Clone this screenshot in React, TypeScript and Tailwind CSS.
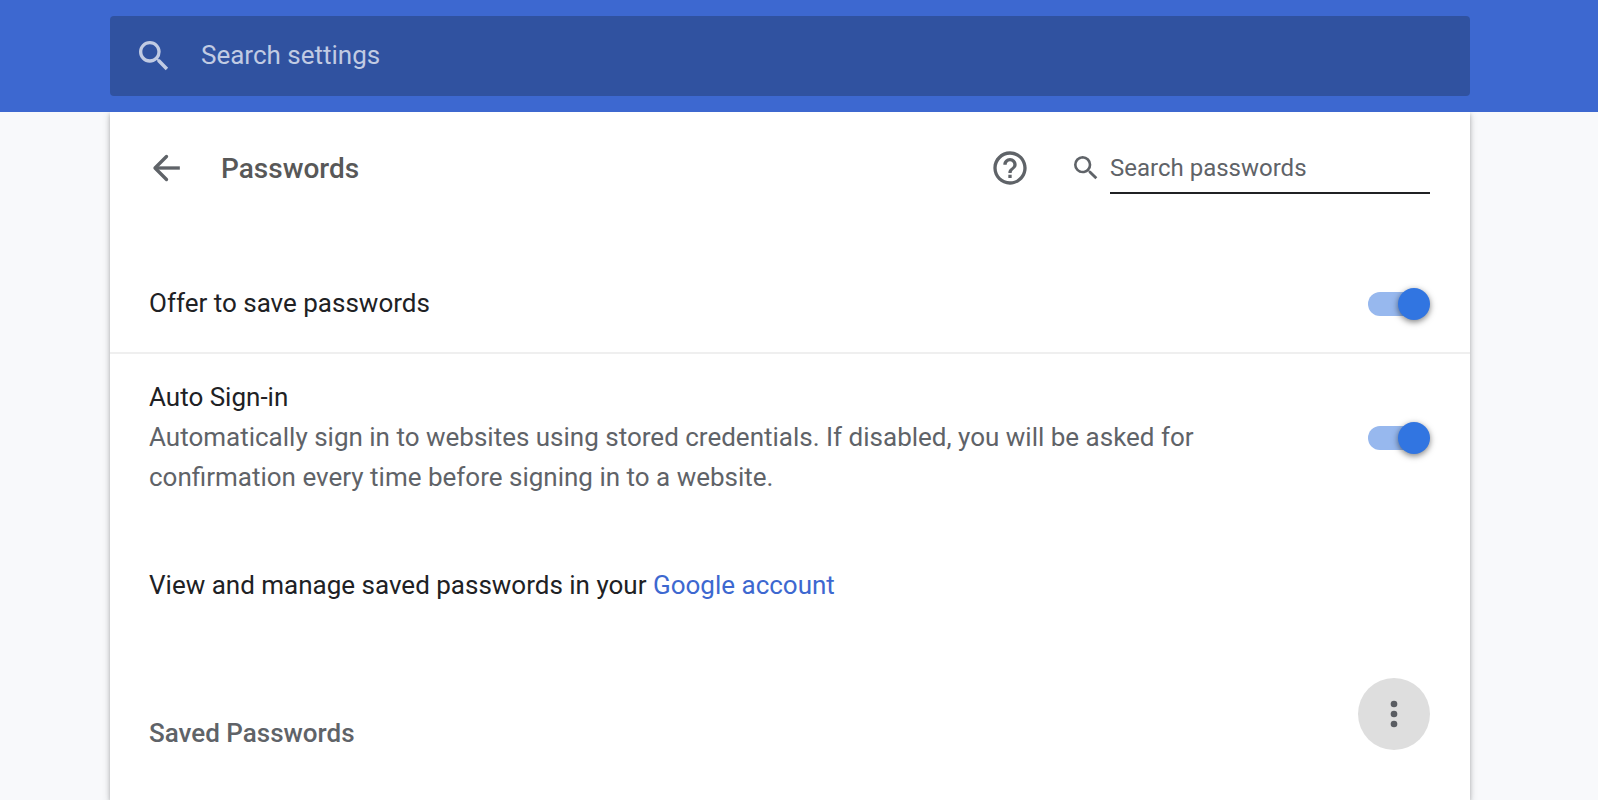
import React, { useState } from 'react';

const SearchIcon: React.FC<{ className: string }> = ({ className }) => (
  <svg viewBox="0 0 24 24" fill="currentColor" className={className} aria-hidden="true">
    <path d="M15.5 14h-.79l-.28-.27A6.471 6.471 0 0 0 16 9.5 6.5 6.5 0 1 0 9.5 16c1.61 0 3.09-.59 4.23-1.57l.27.28v.79l5 4.99L20.49 19l-4.99-5zm-6 0C7.01 14 5 11.99 5 9.5S7.01 5 9.5 5 14 7.01 14 9.5 11.99 14 9.5 14z" />
  </svg>
);

const BackIcon: React.FC = () => (
  <svg
    viewBox="0 0 24 24"
    fill="none"
    stroke="currentColor"
    strokeWidth="2"
    strokeLinejoin="round"
    className="size-10"
    aria-hidden="true"
  >
    <path d="M12.3 5.1L5.4 12l6.9 6.9" strokeLinecap="round" />
    <path d="M5.5 12H20.3" />
  </svg>
);

const HelpIcon: React.FC = () => (
  <svg viewBox="0 0 24 24" fill="currentColor" className="size-10" aria-hidden="true">
    <path d="M11 18h2v-2h-2v2zm1-16C6.48 2 2 6.48 2 12s4.48 10 10 10 10-4.48 10-10S17.52 2 12 2zm0 18c-4.41 0-8-3.59-8-8s3.59-8 8-8 8 3.59 8 8-3.59 8-8 8zm0-14c-2.21 0-4 1.79-4 4h2c0-1.1.9-2 2-2s2 .9 2 2c0 2-3 1.75-3 5h2c0-2.25 3-2.5 3-5 0-2.21-1.79-4-4-4z" />
  </svg>
);

const MoreIcon: React.FC = () => (
  <svg viewBox="0 0 24 24" fill="currentColor" className="size-10" aria-hidden="true">
    <circle cx="12" cy="6" r="2" />
    <circle cx="12" cy="12" r="2" />
    <circle cx="12" cy="18" r="2" />
  </svg>
);

interface ToggleProps {
  id: string;
  checked: boolean;
  onChange: (checked: boolean) => void;
}

const Toggle: React.FC<ToggleProps> = ({ id, checked, onChange }) => (
  <input
    id={id}
    type="checkbox"
    role="switch"
    checked={checked}
    onChange={(event) => onChange(event.target.checked)}
    className="flex h-6 w-[62px] shrink-0 cursor-pointer appearance-none items-center before:h-6 before:w-14 before:shrink-0 before:rounded-full before:bg-[#bdc1c6] after:-ml-14 after:size-8 after:shrink-0 after:rounded-full after:bg-white after:shadow-[0_2px_6px_rgba(0,0,0,0.5)] checked:before:bg-[#97b8ee] checked:after:-ml-[26px] checked:after:bg-[#3175e1]"
  />
);

export default function App() {
  const [offerToSave, setOfferToSave] = useState(true);
  const [autoSignIn, setAutoSignIn] = useState(true);

  return (
    <div className="flex h-screen flex-col overflow-hidden bg-[#f8f9fb] font-[Roboto,sans-serif] text-[26px] leading-10 text-[#202124]">
      <header className="shrink-0 bg-[#3d68d0] py-4 pr-32 pl-[110px]">
        <label className="flex h-20 items-center gap-[27px] rounded bg-[#3052a0] px-6 text-[#c1cbe3]">
          <SearchIcon className="size-10 shrink-0" />
          <input
            type="text"
            aria-label="Search settings"
            placeholder="Search settings"
            className="min-w-0 flex-1 bg-transparent pb-0.5 outline-none placeholder:text-[#c1cbe3]"
          />
        </label>
      </header>

      <div className="min-h-0 flex-1 overflow-hidden pr-32 pl-[110px]">
        <main className="h-full bg-white shadow-[0_2px_4px_rgba(60,64,67,0.3),0_2px_8px_rgba(60,64,67,0.2)]">
          <div className="flex h-28 items-center pr-10 pl-9 text-[#5f6368]">
            <button type="button" aria-label="Back">
              <BackIcon />
            </button>
            <h1 className="ml-[35px] flex-1 pt-0.5 text-[28px] font-medium text-[#585858]">Passwords</h1>
            <button type="button" aria-label="Help">
              <HelpIcon />
            </button>
            <label className="ml-10 flex items-center gap-2">
              <SearchIcon className="size-8" />
              <input
                type="text"
                aria-label="Search passwords"
                placeholder="Search passwords"
                className="h-[52px] w-80 border-b-2 border-[#202124] bg-transparent pt-0.5 text-2xl outline-none placeholder:text-[#5f6368]"
              />
            </label>
          </div>

          <div className="mt-8 flex h-[98px] items-center justify-between border-b-2 border-[#efefef] pr-10 pl-[39px]">
            <label htmlFor="offer-to-save" className="pb-0.5">
              Offer to save passwords
            </label>
            <Toggle id="offer-to-save" checked={offerToSave} onChange={setOfferToSave} />
          </div>

          <div className="flex h-[168px] items-center justify-between gap-32 pr-10 pl-[39px]">
            <label htmlFor="auto-sign-in" className="pb-0.5">
              <span className="block">Auto Sign-in</span>
              <span className="block text-[#5f6368]">
                Automatically sign in to websites using stored credentials. If disabled, you will be asked for
                confirmation every time before signing in to a website.
              </span>
            </label>
            <Toggle id="auto-sign-in" checked={autoSignIn} onChange={setAutoSignIn} />
          </div>

          <p className="mt-4 flex h-24 items-center pr-10 pb-0.5 pl-[39px]">
            <span>
              View and manage saved passwords in your{' '}
              <a href="#account" className="text-[#3d68d0]">
                Google account
              </a>
            </span>
          </p>

          <div className="mt-11 flex items-start justify-between pr-10 pl-[39px]">
            <h2 className="mt-[35px] font-medium text-[#5f6368]">Saved Passwords</h2>
            <button
              type="button"
              aria-label="More actions"
              className="flex size-[72px] items-center justify-center rounded-full bg-[#dedede] text-[#5a5d62]"
            >
              <MoreIcon />
            </button>
          </div>
        </main>
      </div>
    </div>
  );
}
